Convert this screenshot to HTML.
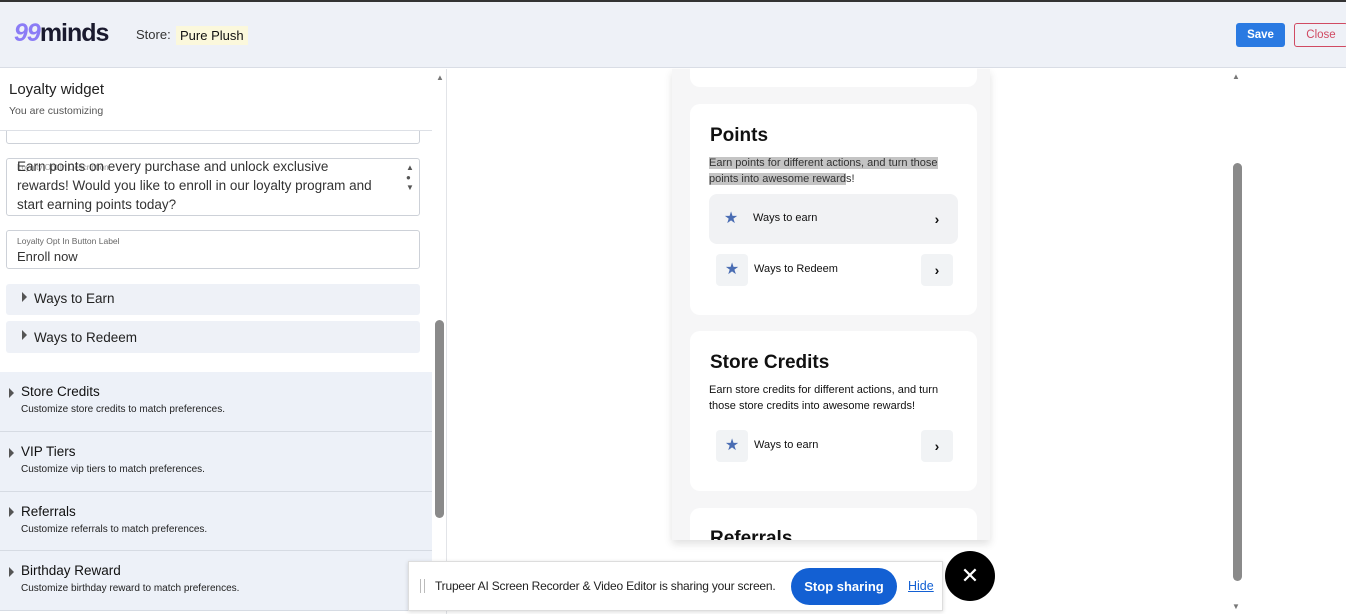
<!DOCTYPE html>
<html><head><style>
*{box-sizing:border-box;margin:0;padding:0}
body{width:1346px;height:614px;overflow:hidden;font-family:"Liberation Sans",sans-serif;background:#fff;position:relative}
.abs{position:absolute}
.hdr{left:0;top:0;width:1346px;height:68px;background:#eef1f7;border-top:2px solid #333;border-bottom:1px solid #d9dde5;z-index:5}
.row{left:0;width:432px;background:#edf1f8;border-bottom:1px solid #d6dbe3}
.row b{position:absolute;left:21px;top:12px;font-size:13.5px;font-weight:normal;color:#111}
.row span{position:absolute;left:21px;top:32px;font-size:10px;color:#222}
.tri{position:absolute;width:0;height:0;border-left:5px solid #555;border-top:5px solid transparent;border-bottom:5px solid transparent}
.card{left:690px;width:287px;background:#fff;border-radius:10px}
.item{position:absolute;left:20px;width:248px;height:50px;border-radius:8px}
.item .ic{position:absolute;left:6px;top:9px;width:32px;height:32px;background:#f1f3f5;border-radius:4px;color:#4a6db3;font-size:16px;text-align:center;line-height:32px}
.item .t{position:absolute;left:44px;top:18px;font-size:11px;color:#111}
.item .ar{position:absolute;right:5px;top:9px;width:32px;height:32px;background:#f1f3f5;border-radius:4px;text-align:center;line-height:32px;font-size:14px;color:#111;font-weight:bold}
.fld{left:6px;width:414px;border:1px solid #cdd1d8;border-radius:3px;background:#fff}
</style></head><body>
<div class="abs hdr">
 <div class="abs" style="left:14px;top:17px;font-size:25px;font-weight:bold;letter-spacing:-1px"><span style="color:#8b7cf6;font-style:italic">99</span><span style="color:#1a1a2e">minds</span></div>
 <div class="abs" style="left:136px;top:25px;font-size:13px;color:#333">Store:</div>
 <div class="abs" style="left:176px;top:24px;padding:2px 4px;background:#fbf8dc;font-size:13px;color:#111">Pure Plush</div>
 <div class="abs" style="left:1236px;top:21px;width:49px;height:24px;background:#2a7ae2;border-radius:3px;color:#fff;font-size:11.5px;font-weight:bold;text-align:center;line-height:24px">Save</div>
 <div class="abs" style="left:1294px;top:21px;width:54px;height:24px;border:1px solid #d04a62;border-radius:3px;color:#d04a62;font-size:11.5px;text-align:center;line-height:22px">Close</div>
</div>
<!-- left panel -->
<div class="abs fld" style="top:120px;height:24px"></div>
<div class="abs" style="left:0;top:69px;width:432px;height:62px;background:#fff;border-bottom:1px solid #dde0e6">
 <div class="abs" style="left:9px;top:12px;font-size:15px;color:#222">Loyalty widget</div>
 <div class="abs" style="left:9px;top:36px;font-size:10.5px;color:#555">You are customizing</div>
</div>
<div class="abs fld" style="top:158px;height:58px">
 <div class="abs" style="left:10px;top:4px;font-size:8px;color:#999">Loyalty Opt In Description</div>
 <div class="abs" style="left:10px;top:-2px;width:362px;font-size:13.5px;line-height:19px;color:#333">Earn points on every purchase and unlock exclusive rewards! Would you like to enroll in our loyalty program and start earning points today?</div>
 <div class="abs" style="left:399px;top:4px;font-size:8px;color:#555;line-height:10px">▲<br>●<br>▼</div>
</div>
<div class="abs fld" style="top:230px;height:39px">
 <div class="abs" style="left:10px;top:5px;font-size:8.5px;color:#666">Loyalty Opt In Button Label</div>
 <div class="abs" style="left:10px;top:18px;font-size:13px;color:#333">Enroll now</div>
</div>
<div class="abs" style="left:6px;top:284px;width:414px;height:31px;background:#eef1f7;border-radius:3px"><div class="tri" style="left:16px;top:8px"></div><div class="abs" style="left:28px;top:7px;font-size:13.5px;color:#222">Ways to Earn</div></div>
<div class="abs" style="left:6px;top:321px;width:414px;height:32px;background:#eef1f7;border-radius:3px"><div class="tri" style="left:16px;top:9px"></div><div class="abs" style="left:28px;top:9px;font-size:13.5px;color:#222">Ways to Redeem</div></div>
<div class="abs row" style="top:372px;height:60px"><div class="tri" style="left:9px;top:16px"></div><b>Store Credits</b><span>Customize store credits to match preferences.</span></div>
<div class="abs row" style="top:432px;height:60px"><div class="tri" style="left:9px;top:16px"></div><b>VIP Tiers</b><span>Customize vip tiers to match preferences.</span></div>
<div class="abs row" style="top:492px;height:59px"><div class="tri" style="left:9px;top:15px"></div><b>Referrals</b><span>Customize referrals to match preferences.</span></div>
<div class="abs row" style="top:551px;height:60px"><div class="tri" style="left:9px;top:16px"></div><b>Birthday Reward</b><span>Customize birthday reward to match preferences.</span></div>
<div class="abs" style="left:432px;top:69px;width:15px;height:545px;background:#fff;border-right:1px solid #e2e4e8"></div>
<div class="abs" style="left:436px;top:73px;font-size:8px;color:#777">▲</div>
<div class="abs" style="left:435px;top:320px;width:9px;height:198px;background:#8a8a8a;border-radius:5px"></div>
<!-- preview -->
<div class="abs" style="left:672px;top:69px;width:318px;height:471px;background:#f6f6f7;box-shadow:0 4px 8px rgba(0,0,0,.12)"></div>
<div class="abs card" style="top:50px;height:37px"></div>
<div class="abs card" style="top:104px;height:211px">
 <div class="abs" style="left:20px;top:21px;font-size:19px;font-weight:bold;color:#111">Points</div>
 <div class="abs" style="left:19px;top:51px;width:240px;font-size:11px;line-height:16px;color:#333"><span style="background:#c4c4c4">Earn points for different actions, and turn those points into awesome reward</span>s!</div>
 <div class="item" style="top:90px;left:19px;width:249px;background:#f1f2f4"><div class="ic" style="background:transparent">★</div><div class="t">Ways to earn</div><div class="ar" style="background:transparent">›</div></div>
 <div class="item" style="top:141px"><div class="ic">★</div><div class="t">Ways to Redeem</div><div class="ar">›</div></div>
</div>
<div class="abs card" style="top:331px;height:160px">
 <div class="abs" style="left:20px;top:21px;font-size:19px;font-weight:bold;color:#111">Store Credits</div>
 <div class="abs" style="left:19px;top:51px;width:250px;font-size:11px;line-height:16px;color:#111">Earn store credits for different actions, and turn those store credits into awesome rewards!</div>
 <div class="item" style="top:90px"><div class="ic">★</div><div class="t">Ways to earn</div><div class="ar">›</div></div>
</div>
<div class="abs card" style="top:508px;height:32px;overflow:hidden;border-radius:10px 10px 0 0">
 <div class="abs" style="left:20px;top:20px;font-size:19px;font-weight:bold;color:#111">Referrals</div>
</div>
<div class="abs" style="left:1232px;top:72px;font-size:8px;color:#777">▲</div>
<div class="abs" style="left:1232px;top:602px;font-size:8px;color:#777">▼</div>
<div class="abs" style="left:1233px;top:163px;width:9px;height:418px;background:#8a8a8a;border-radius:5px"></div>
<!-- share bar -->
<div class="abs" style="left:408px;top:561px;width:535px;height:50px;background:#fff;border:1px solid #ddd;box-shadow:0 1px 4px rgba(0,0,0,.15)">
 <div class="abs" style="left:11px;top:17px;width:5px;height:14px;border-left:1px solid #bbb;border-right:1px solid #bbb"></div>
 <div class="abs" style="left:26px;top:17px;font-size:12px;letter-spacing:-0.2px;color:#222;white-space:nowrap">Trupeer AI Screen Recorder &amp; Video Editor is sharing your screen.</div>
 <div class="abs" style="left:382px;top:6px;width:106px;height:37px;background:#1360d3;border-radius:19px;color:#fff;font-size:13px;font-weight:bold;text-align:center;line-height:37px">Stop sharing</div>
 <div class="abs" style="left:499px;top:17px;font-size:12.5px;color:#1360d3;text-decoration:underline">Hide</div>
</div>
<div class="abs" style="left:945px;top:551px;width:50px;height:50px;background:#000;border-radius:50%;color:#fff;font-size:22px;text-align:center;line-height:50px">✕</div>
</body></html>
